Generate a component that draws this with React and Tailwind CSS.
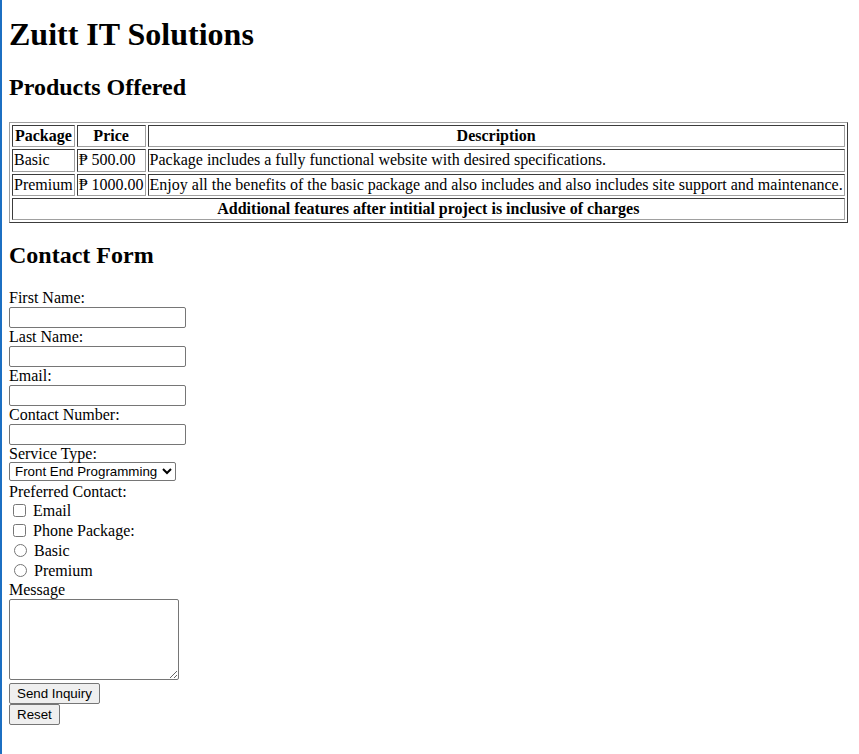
export default function App() {
  const cell =
    "border border-t-[#3c3c3c] border-l-[#3c3c3c] border-b-[#a0a0a0] border-r-[#a0a0a0] p-px";
  const field =
    "block h-[21px] w-[177px] border border-[#767676] rounded-[2px] bg-white px-[2px] text-[13.33px] font-['Liberation_Sans',Arial,sans-serif]";
  const btn =
    "block h-[21px] border border-[#767676] rounded-[2px] bg-[#efefef] px-[7px] text-[13.33px] leading-[17px] font-['Liberation_Sans',Arial,sans-serif] text-black";

  return (
    <div className="min-h-[754px] border-l-2 border-[#1c6fc2] pl-[7px] pr-2 pt-[16px] pb-6 bg-white text-black text-[16px] leading-[18.4px] font-['Liberation_Serif','Times_New_Roman',serif]">
      <h1 className="text-[32px] leading-[36.8px] font-bold">Zuitt IT Solutions</h1>
      <h2 className="mt-[21.44px] text-[24px] leading-[27.6px] font-bold">Products Offered</h2>

      <table className="mt-[19.92px] border-separate border-spacing-[2px] border border-t-[#a0a0a0] border-l-[#a0a0a0] border-b-[#3c3c3c] border-r-[#3c3c3c]">
        <thead>
          <tr>
            <th className={cell}>Package</th>
            <th className={cell}>Price</th>
            <th className={cell}>Description</th>
          </tr>
        </thead>
        <tbody>
          <tr>
            <td className={cell}>Basic</td>
            <td className={cell}>₱ 500.00</td>
            <td className={cell}>Package includes a fully functional website with desired specifications.</td>
          </tr>
          <tr>
            <td className={cell}>Premium</td>
            <td className={cell}>₱ 1000.00</td>
            <td className={cell}>
              Enjoy all the benefits of the basic package and also includes and also includes site support and maintenance.
            </td>
          </tr>
          <tr>
            <th colSpan={3} className={cell}>
              Additional features after intitial project is inclusive of charges
            </th>
          </tr>
        </tbody>
      </table>

      <h2 className="mt-[19px] text-[24px] leading-[27.6px] font-bold">Contact Form</h2>

      <form className="mt-[19px]" onSubmit={(e) => e.preventDefault()}>
        <label className="block h-[18px]">First Name:</label>
        <input type="text" className={field} />
        <label className="block h-[18px]">Last Name:</label>
        <input type="text" className={field} />
        <label className="block h-[18px]">Email:</label>
        <input type="email" className={field} />
        <label className="block h-[18px]">Contact Number:</label>
        <input type="tel" className={field} />
        <label className="block h-[17px]">Service Type:</label>
        <select className="block h-[19px] w-[167px] border border-[#767676] rounded-[2px] bg-white pl-px text-[13.33px] font-['Liberation_Sans',Arial,sans-serif]">
          <option>Front End Programming</option>
          <option>Back End Programming</option>
          <option>Full Stack Programming</option>
        </select>
        <label className="block h-[18px] mt-[2px]">Preferred Contact:</label>

        <div className="flex items-center h-[20px]">
          <input type="checkbox" className="ml-[4px] mr-[3px] w-[13px] h-[13px]" />
          <span className="ml-[4px]">Email</span>
        </div>
        <div className="flex items-center h-[20px]">
          <input type="checkbox" className="ml-[4px] mr-[3px] w-[13px] h-[13px]" />
          <span className="ml-[4px]">Phone Package:</span>
        </div>
        <div className="flex items-center h-[20px]">
          <input type="radio" name="pkg" className="ml-[5px] mr-[3px] w-[13px] h-[13px]" />
          <span className="ml-[4px]">Basic</span>
        </div>
        <div className="flex items-center h-[20px]">
          <input type="radio" name="pkg" className="ml-[5px] mr-[3px] w-[13px] h-[13px]" />
          <span className="ml-[4px]">Premium</span>
        </div>

        <label className="block h-[18px]">Message</label>
        <textarea className="block h-[81px] w-[170px] border border-[#767676] rounded-[2px] bg-white p-[2px] text-[13.33px] font-['Liberation_Mono',monospace]" />
        <button type="submit" className={`${btn} mt-[3px]`}>Send Inquiry</button>
        <button type="reset" className={btn}>Reset</button>
      </form>
    </div>
  );
}
